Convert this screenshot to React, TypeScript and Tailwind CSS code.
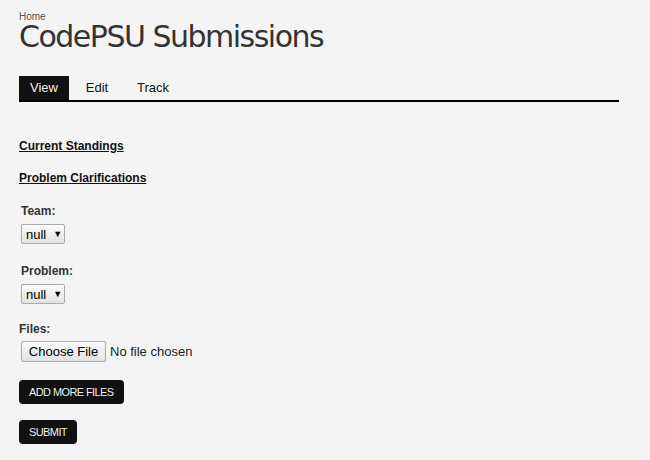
import React from 'react';

const sans = "font-['Liberation_Sans',Arial,sans-serif]";

function FakeSelect() {
  return (
    <div className="flex h-[20px] w-[44px] items-center gap-[7px] rounded-[2px] border border-[#a9a9a9] bg-gradient-to-b from-[#fbfbfb] to-[#e3e3e3] pl-[4px] text-[13px] leading-none text-black">
      <span>null</span>
      <span className="text-[9px]">▼</span>
    </div>
  );
}

export default function App() {
  return (
    <div className={`min-h-[460px] w-[650px] bg-[#f4f4f4] px-[19px] pt-[11px] leading-[14px] ${sans}`}>
      <div className="text-[10px] leading-[12px] text-[#555]">Home</div>
      <h1 className="font-['DejaVu_Sans',sans-serif] text-[30px] leading-[28px] tracking-[-1.5px] text-[#333]">
        CodePSU Submissions
      </h1>

      <div className="mt-[25px] flex h-[26px] w-[600px] border-b-2 border-black text-[13px]">
        <div className="flex w-[50px] items-center justify-center bg-[#111] text-[#eee]">View</div>
        <div className="flex w-[56px] items-center justify-center text-[#111]">Edit</div>
        <div className="flex w-[56px] items-center justify-center text-[#111]">Track</div>
      </div>

      <div className="mt-[37px] text-[12px] font-bold text-[#111] underline">Current Standings</div>
      <div className="mt-[18px] text-[12px] font-bold text-[#111] underline">Problem Clarifications</div>

      <div className="mt-[19px] pl-[2px] text-[12px] font-bold text-[#333]">Team:</div>
      <div className="mt-[6px] pl-[2px]">
        <FakeSelect />
      </div>

      <div className="mt-[20px] pl-[2px] text-[12px] font-bold text-[#333]">Problem:</div>
      <div className="mt-[6px] pl-[2px]">
        <FakeSelect />
      </div>

      <div className="mt-[18px] text-[12px] font-bold text-[#333]">Files:</div>
      <div className="mt-[5px] flex items-center gap-[4px] pl-[2px] text-[13px]">
        <div className="flex h-[21px] w-[85px] items-center justify-center rounded-[2px] border border-[#a9a9a9] bg-gradient-to-b from-[#fbfbfb] to-[#e3e3e3] text-black">
          Choose File
        </div>
        <span className="text-[#222]">No file chosen</span>
      </div>

      <div className="mt-[18px] flex flex-col items-start gap-[16px]">
        <button className="h-[24px] rounded-[4px] bg-[#111] px-[10px] text-[11px] tracking-[-0.6px] text-[#eee]">ADD MORE FILES</button>
        <button className="h-[24px] rounded-[4px] bg-[#111] px-[10px] text-[11px] tracking-[-0.6px] text-[#eee]">SUBMIT</button>
      </div>
    </div>
  );
}
